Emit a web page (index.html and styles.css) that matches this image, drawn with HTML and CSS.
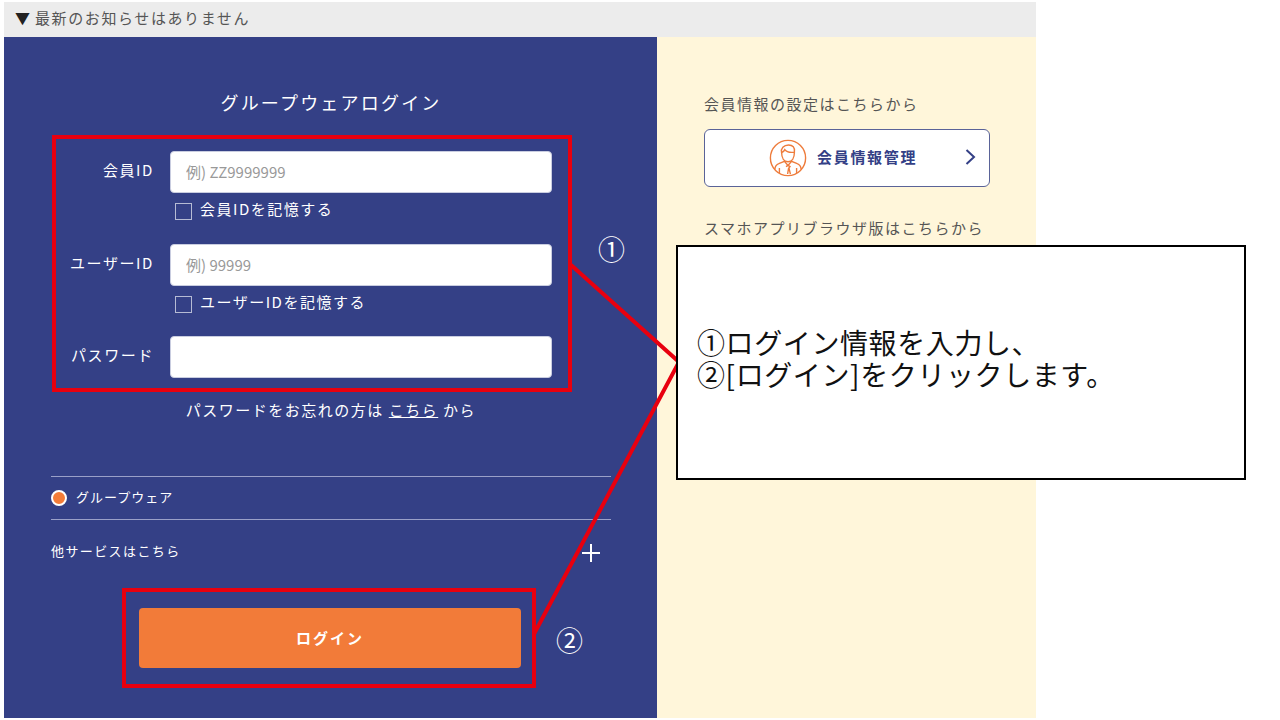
FILE: index.html
```html
<!DOCTYPE html>
<html lang="ja">
<head>
  <meta charset="UTF-8">
  <title>グループウェアログイン</title>
  <link rel="stylesheet" href="styles.css">
</head>
<body>

<div class="page">
  <div class="notice"><span class="notice-mark">▼</span> 最新のお知らせはありません</div>

  <div class="columns">
    <main class="login">
      <h1>グループウェアログイン</h1>

      <form class="login-form">
        <label class="field-label" for="member">会員ID</label>
        <input class="field-input" id="member" type="text" placeholder="例) ZZ9999999">
        <label class="remember remember-first"><span class="check"></span><span class="remember-text">会員IDを記憶する</span></label>

        <label class="field-label" for="user">ユーザーID</label>
        <input class="field-input" id="user" type="text" placeholder="例) 99999">
        <label class="remember"><span class="check"></span><span class="remember-text">ユーザーIDを記憶する</span></label>

        <label class="field-label" for="pass">パスワード</label>
        <input class="field-input" id="pass" type="password">
      </form>

      <p class="forgot">パスワードをお忘れの方は <a href="#">こちら</a> から</p>

      <div class="service">
        <span class="radio"></span>
        <span class="service-name">グループウェア</span>
      </div>
      <div class="other">
        <span>他サービスはこちら</span>
        <span class="plus"></span>
      </div>

      <button class="login-btn" type="button">ログイン</button>
    </main>

    <aside class="side">
      <p class="side-text">会員情報の設定はこちらから</p>
      <a class="member-btn" href="#">
        <svg class="member-icon" width="38" height="38" viewBox="0 0 38 38" fill="none" stroke="#ee7c3c" stroke-width="1.4">
          <circle cx="19" cy="19" r="17.6"/>
          <path d="M12.6 13.2c0 6 2.6 9.6 6.4 9.6s6.4-3.6 6.4-9.6"/>
          <path d="M12.6 13.6c-1-4 2-7.6 7-7.6 4 0 6.6 2.4 5.8 7.2-3.4.4-8-.2-9.6-2.6-.6 1.4-1.8 2.4-3.2 3z"/>
          <path d="M5.8 30.4c.4-3.6 1.6-5 4-5.8l5.6-2.2 3.6 4 3.6-4 5.6 2.2c2.4.8 3.6 2.2 4 5.8"/>
          <path d="M17 27.6l2-1.2 2 1.2-1 1.6 1.4 6M18.6 35l1-5.8-.6 0"/>
          <path d="M10.4 29v5M27.6 29v5"/>
        </svg>
        <span class="member-label">会員情報管理</span>
        <svg class="chevron" width="11" height="16" viewBox="0 0 11 16" fill="none" stroke="#344086" stroke-width="2">
          <path d="M1.5 1l7.5 7-7.5 7"/>
        </svg>
      </a>
      <p class="side-text side-text-app">スマホアプリブラウザ版はこちらから</p>
    </aside>
  </div>
</div>

<!-- 説明用の注釈 -->
<div class="mark mark-form"></div>
<div class="mark mark-btn"></div>
<svg class="leader" width="1280" height="720" viewBox="0 0 1280 720" fill="none" stroke="#e8000f" stroke-width="4">
  <path d="M571 265L679 362L534 634"/>
</svg>
<span class="step step-one">①</span>
<span class="step step-two">②</span>
<div class="callout">①ログイン情報を入力し、<br>②[ログイン]をクリックします。</div>

</body>
</html>
```

FILE: styles.css
```css
* {
  box-sizing: border-box;
}
body {
  margin: 0;
  background: white;
  font-family: "Noto Sans CJK JP", "Noto Sans", sans-serif;
  overflow: hidden;
}
.page {
  width: 1032px;
  height: 716px;
  margin: 2px 0 0 4px;
  display: flex;
  flex-direction: column;
}
.notice {
  height: 35px;
  padding-left: 11px;
  background: #ececec;
  color: #555;
  font-size: 15px;
  line-height: 32px;
  letter-spacing: 1.6px;
  white-space: nowrap;
}
.notice-mark {
  color: #222;
  letter-spacing: 0;
}
.columns {
  flex: 1;
  display: flex;
}

/* left panel */
.login {
  width: 653px;
  padding: 51px 46px 0 47px;
  background: #344086;
  color: white;
}
.login h1 {
  margin: 0 0 35px;
  font-size: 18px;
  font-weight: 400;
  line-height: 28px;
  letter-spacing: 2.2px;
  text-align: center;
}
.login-form {
  display: grid;
  grid-template-columns: 103px 382px;
  column-gap: 16px;
  align-items: start;
}
.field-label {
  height: 38px;
  font-size: 15px;
  line-height: 38px;
  letter-spacing: 1.6px;
  text-align: right;
  white-space: nowrap;
}
.field-input {
  width: 382px;
  height: 42px;
  padding: 0 15px 2px;
  border: 1px solid #c9cde0;
  border-radius: 4px;
  background: white;
  font-family: inherit;
  font-size: 15px;
}
.field-input::placeholder {
  color: #999;
  opacity: 1;
}
.remember {
  grid-column: 2;
  display: flex;
  align-items: center;
  gap: 8px;
  height: 18px;
  margin: 9px 0 23px 5px;
  font-size: 15px;
  letter-spacing: 1.5px;
}
.remember-first {
  margin-bottom: 24px;
}
.remember-text {
  margin-bottom: 6px;
}
.check {
  width: 17px;
  height: 17px;
  border: 1px solid #b6bbd4;
  background: transparent;
}
.forgot {
  margin: 22px 0 56px;
  font-size: 15px;
  line-height: 20px;
  letter-spacing: 1.5px;
  text-align: center;
}
.forgot a {
  color: white;
}
.service {
  height: 44px;
  display: flex;
  align-items: center;
  gap: 9px;
  border-top: 1px solid #9aa0c8;
  border-bottom: 1px solid #9aa0c8;
  font-size: 13px;
  letter-spacing: 1px;
}
.service-name {
  margin-bottom: 4px;
}
.radio {
  width: 16px;
  height: 16px;
  border: 2px solid white;
  border-radius: 50%;
  background: #f37c38;
}
.other {
  height: 64px;
  padding-bottom: 3px;
  display: flex;
  align-items: center;
  justify-content: space-between;
  font-size: 13px;
  letter-spacing: 1.4px;
}
.plus {
  width: 18px;
  height: 18px;
  margin: 5px 11px 0 0;
  background:
    linear-gradient(white, white) center / 18px 2px no-repeat,
    linear-gradient(white, white) center / 2px 18px no-repeat;
}
.login-btn {
  display: block;
  width: 382px;
  height: 60px;
  margin: 24px 0 0 88px;
  padding: 0 0 2px;
  border: none;
  border-radius: 4px;
  background: #f27b39;
  color: white;
  font-family: inherit;
  font-size: 15px;
  font-weight: 700;
  letter-spacing: 2px;
  cursor: pointer;
}

/* right panel */
.side {
  flex: 1;
  padding: 55px 46px 0 47px;
  background: #fff6da;
}
.side-text {
  margin: 0;
  color: #555;
  font-size: 15px;
  line-height: 24px;
  letter-spacing: 1.5px;
  white-space: nowrap;
}
.side-text-app {
  margin-top: 29px;
}
.member-btn {
  display: flex;
  align-items: center;
  width: 286px;
  height: 58px;
  margin-top: 13px;
  padding: 0 13px 0 64px;
  border: 1.5px solid #5a6398;
  border-radius: 6px;
  background: white;
  color: #344086;
  text-decoration: none;
}
.member-label {
  margin: 0 0 3px 10px;
  font-size: 15px;
  font-weight: 700;
  letter-spacing: 1.7px;
  white-space: nowrap;
}
.chevron {
  margin: 0 0 2px auto;
}

/* annotations */
.mark {
  position: absolute;
  border: 4px solid #e8000f;
}
.mark-form {
  left: 52px;
  top: 135px;
  width: 520px;
  height: 257px;
}
.mark-btn {
  left: 122px;
  top: 588px;
  width: 414px;
  height: 100px;
}
.leader {
  position: absolute;
  left: 0;
  top: 0;
}
.step {
  position: absolute;
  color: white;
  font-size: 27px;
  line-height: 32px;
}
.step-one {
  left: 598px;
  top: 233px;
}
.step-two {
  left: 556px;
  top: 624px;
}
.callout {
  position: absolute;
  left: 676px;
  top: 245px;
  width: 570px;
  height: 235px;
  padding: 79px 0 0 19px;
  border: 2px solid black;
  background: white;
  color: #111;
  font-size: 28px;
  line-height: 32px;
  letter-spacing: 0.6px;
  white-space: nowrap;
}
```
